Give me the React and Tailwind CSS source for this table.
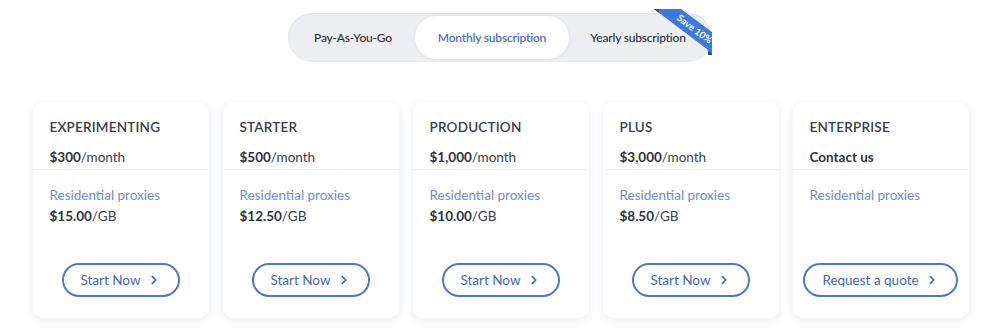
import { ChevronRight } from "lucide-react";

const plans = [
  { name: "EXPERIMENTING", price: "$300", per: "/month", gb: "$15.00", cta: "Start Now" },
  { name: "STARTER", price: "$500", per: "/month", gb: "$12.50", cta: "Start Now" },
  { name: "PRODUCTION", price: "$1,000", per: "/month", gb: "$10.00", cta: "Start Now" },
  { name: "PLUS", price: "$3,000", per: "/month", gb: "$8.50", cta: "Start Now" },
  { name: "ENTERPRISE", price: "Contact us", per: "", gb: null, cta: "Request a quote" },
];

function Toggle() {
  return (
    <div className="relative flex items-center h-[49px] w-[424px] p-[3px] rounded-full bg-[#eceef2] shadow-[inset_0_1px_3px_rgba(0,0,0,0.06)]">
      <button className="w-[124px] h-full text-[12px] tracking-[-0.2px] font-medium text-[#2c2f3a]">
        Pay-As-You-Go
      </button>
      <button className="w-[154px] h-full rounded-full bg-white text-[12px] tracking-[-0.2px] font-semibold text-[#4a72c0] shadow-[0_1px_4px_rgba(0,0,0,0.06)]">
        Monthly subscription
      </button>
      <button className="w-[138px] h-full text-[12px] tracking-[-0.2px] font-medium text-[#2c2f3a]">
        Yearly subscription
      </button>

      {/* corner ribbon */}
      <div className="absolute left-[366px] top-[-4px] w-[59px] h-[46px]">
        <svg width="59" height="46" viewBox="0 0 59 46" className="absolute inset-0">
          <polygon points="0,0 27,0 58,23 58,44" fill="#3b7be0" />
          <polygon points="0,0 5,4 5,0" fill="#1d4fa6" />
          <polygon points="54,41 58,44 58,46 54,46" fill="#1d4fa6" />
        </svg>
        <span className="absolute left-[20px] top-[15px] w-[40px] text-center rotate-[37deg] text-[9.5px] font-bold leading-[10px] text-white whitespace-nowrap">
          Save 10%
        </span>
      </div>
    </div>
  );
}

function PlanCard({ plan }) {
  return (
    <div className="flex flex-col w-[176px] h-[216px] rounded-[10px] bg-white shadow-[0_2px_10px_rgba(90,110,170,0.13)]">
      <div className="px-[17px] pt-[16px] pb-[3px] border-b border-[#f0f1f4]">
        <div className="text-[13.5px] font-semibold tracking-[0.2px] text-[#3a3e4a] leading-[18px]">
          {plan.name}
        </div>
        <div className="mt-[12px] text-[13.5px] leading-[18px] text-[#3a3e4a]">
          <span className="font-bold text-[#2f3340]">{plan.price}</span>
          {plan.per}
        </div>
      </div>
      <div className="px-[17px] pt-[16px]">
        <div className="text-[13.5px] leading-[18px] text-[#6a8fd4]">Residential proxies</div>
        {plan.gb && (
          <div className="mt-[3px] text-[13.5px] leading-[18px] text-[#3a3e4a]">
            <span className="font-bold text-[#2f3340]">{plan.gb}</span>/GB
          </div>
        )}
      </div>
      <div className="mt-auto mb-[21px] flex justify-center">
        <button
          className={`flex items-center justify-center gap-[6px] h-[34px] ${
            plan.gb ? "w-[118px]" : "w-[155px]"
          } rounded-full border-2 border-[#4f79c6] text-[13.5px] text-[#3d68b5]`}
        >
          {plan.cta}
          <ChevronRight size={14} strokeWidth={3} />
        </button>
      </div>
    </div>
  );
}

export default function App() {
  return (
    <div
      className="w-[1000px] h-[336px] bg-white flex flex-col items-center pt-[13px]"
      style={{ fontFamily: "Lato, 'Open Sans', sans-serif" }}
    >
      <Toggle />
      <div className="mt-[40px] flex gap-[14px] pl-[1px]">
        {plans.map((p) => (
          <PlanCard key={p.name} plan={p} />
        ))}
      </div>
    </div>
  );
}
